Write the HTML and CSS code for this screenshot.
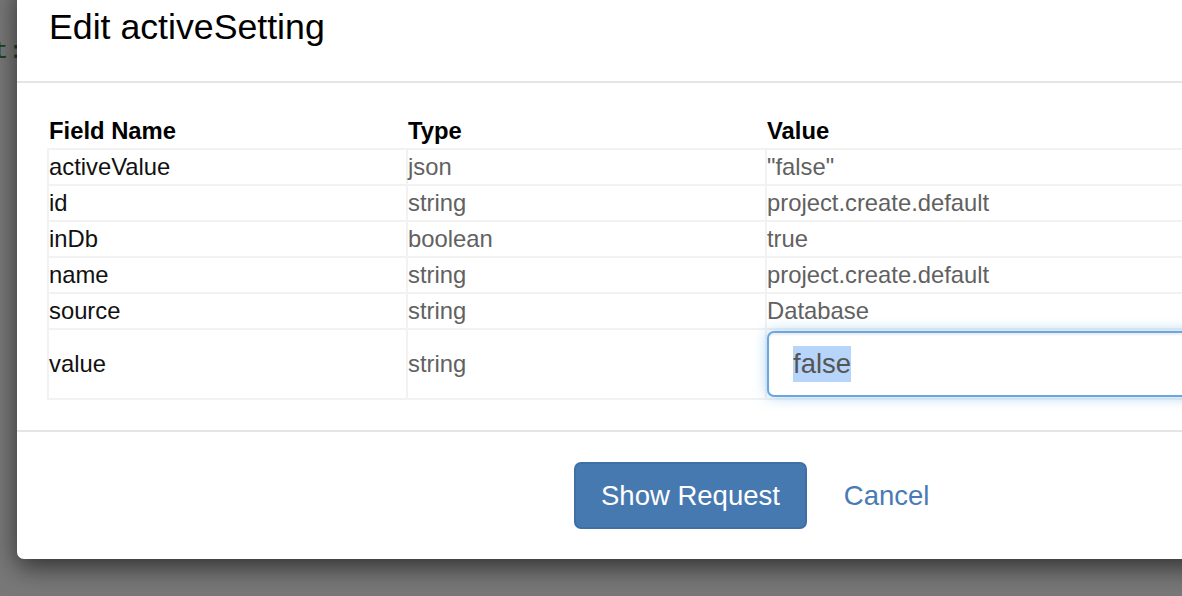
FILE: index.html
```html
<!DOCTYPE html>
<html>
<head>
<meta charset="utf-8">
<link rel="stylesheet" href="styles.css">
</head>
<body>
<div class="behind" aria-hidden="true">t:</div>
<div class="page">
  <div class="modal">
    <div class="modal-header">
      <h3 class="modal-title">Edit activeSetting</h3>
    </div>
    <div class="modal-body">
      <table class="fields">
        <colgroup><col class="c1"><col class="c2"><col class="c3"></colgroup>
        <thead>
          <tr><th>Field Name</th><th>Type</th><th>Value</th></tr>
        </thead>
        <tbody>
          <tr><td class="name">activeValue</td><td>json</td><td>"false"</td></tr>
          <tr><td class="name">id</td><td>string</td><td>project.create.default</td></tr>
          <tr><td class="name">inDb</td><td>boolean</td><td>true</td></tr>
          <tr><td class="name">name</td><td>string</td><td>project.create.default</td></tr>
          <tr><td class="name">source</td><td>string</td><td>Database</td></tr>
          <tr class="edit"><td class="name">value</td><td>string</td><td><div class="input"><span class="sel">false</span></div></td></tr>
        </tbody>
      </table>
    </div>
    <div class="modal-footer">
      <button class="btn-primary">Show Request</button>
      <a class="btn-link">Cancel</a>
    </div>
  </div>
</div>
</body>
</html>
```

FILE: styles.css
```css
html, body {
  margin: 0;
  height: 100%;
  overflow: hidden;
  background: #787878;
  font-family: "Liberation Sans", Arial, sans-serif;
}

.behind {
  position: absolute;
  left: -6px;
  top: 38px;
  font-family: "Liberation Mono", monospace;
  font-size: 24px;
  color: #1d3f1d;
}

.page {
  position: relative;
  padding-left: 17px;
}

.modal {
  width: 1400px;
  margin-top: -20px;
  background: #fff;
  border-radius: 7px;
  box-shadow: 0 8px 26px rgba(0, 0, 0, 0.6);
}

.modal-header {
  padding: 28px 0 34px 32px;
  border-bottom: 2px solid #e5e5e5;
}

.modal-title {
  margin: 0;
  font-size: 35.7px;
  line-height: 39px;
  font-weight: normal;
  color: #000;
}

.modal-body {
  padding: 31px 0 30px 30px;
}

.fields {
  border-collapse: separate;
  border-spacing: 0;
  table-layout: fixed;
  width: 1300px;
  font-size: 23.8px;
  line-height: 34px;
}

.c1, .c2 { width: 359px; }

.fields th {
  text-align: left;
  font-weight: bold;
  color: #000;
  padding: 0;
  border-left: 2px solid transparent;
}

.fields td {
  padding: 0;
  border-top: 2px solid #f2f2f2;
  border-left: 2px solid #f2f2f2;
  color: #616161;
  white-space: nowrap;
  vertical-align: middle;
}

.fields td.name { color: #111; }

.fields tr.edit td {
  padding: 1px 0;
  border-bottom: 2px solid #f2f2f2;
}

.input {
  box-sizing: border-box;
  height: 66px;
  display: flex;
  align-items: center;
  padding-left: 24px;
  border: 2px solid #6aa7e0;
  border-radius: 7px;
  background: #fff;
  box-shadow: inset 0 2px 2px rgba(0, 0, 0, 0.075), 0 0 14px rgba(102, 175, 233, 0.55);
}

.sel {
  font-size: 27.5px;
  line-height: 36px;
  color: #555;
  background: #b7d5fb;
}

.modal-footer {
  display: flex;
  align-items: center;
  gap: 37px;
  padding: 30px 0 30px 557px;
  border-top: 2px solid #e5e5e5;
}

.btn-primary {
  box-sizing: border-box;
  height: 67px;
  padding: 0 25px;
  border: 2px solid #3f6fa4;
  border-radius: 7px;
  background: #4779b1;
  color: #fff;
  font-family: "Liberation Sans", Arial, sans-serif;
  font-size: 27.5px;
}

.btn-link {
  color: #4a7ab5;
  font-size: 27.5px;
}
```
